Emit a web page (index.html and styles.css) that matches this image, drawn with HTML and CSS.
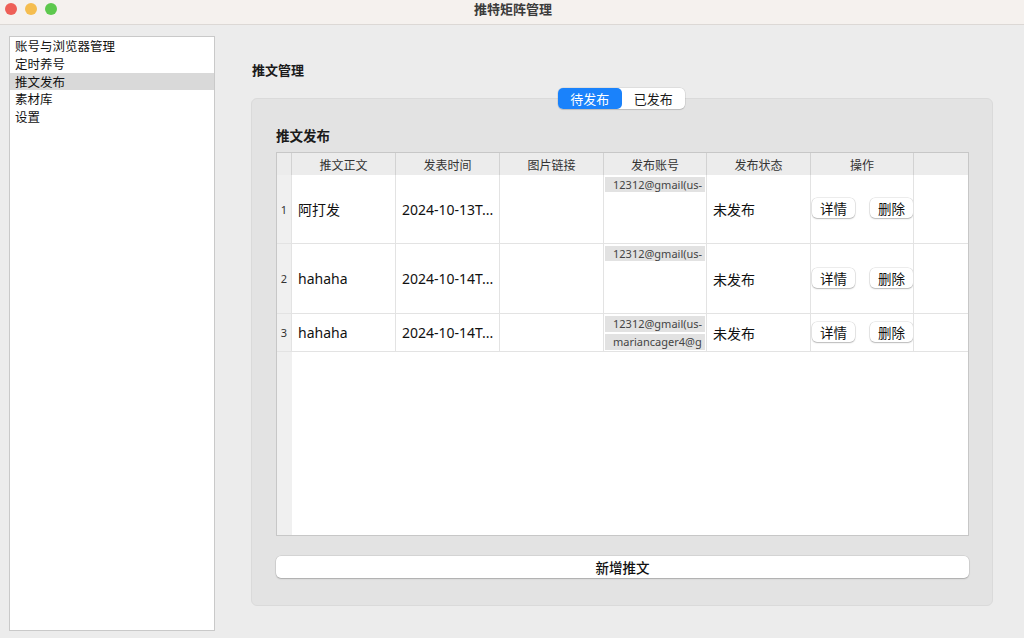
FILE: index.html
```html
<!DOCTYPE html>
<html lang="zh">
<head>
<meta charset="utf-8">
<title>推特矩阵管理</title>
<link rel="stylesheet" href="styles.css">
</head>
<body>
<div class="window">
  <header class="titlebar">
    <div class="lights">
      <span class="light red"></span>
      <span class="light yellow"></span>
      <span class="light green"></span>
    </div>
    <div class="title">推特矩阵管理</div>
  </header>
  <div class="main">
    <aside class="sidebar">
      <div class="nav-item">账号与浏览器管理</div>
      <div class="nav-item">定时养号</div>
      <div class="nav-item active">推文发布</div>
      <div class="nav-item">素材库</div>
      <div class="nav-item">设置</div>
    </aside>
    <section class="content">
      <h1 class="page-title">推文管理</h1>
      <div class="segmented">
        <span class="seg on">待发布</span>
        <span class="seg">已发布</span>
      </div>
      <div class="group">
        <div class="group-title">推文发布</div>
        <div class="table">
          <div class="row head">
            <div class="idx"></div>
            <div class="cell">推文正文</div>
            <div class="cell">发表时间</div>
            <div class="cell">图片链接</div>
            <div class="cell">发布账号</div>
            <div class="cell">发布状态</div>
            <div class="cell">操作</div>
            <div class="filler"></div>
          </div>
          <div class="row r1">
            <div class="idx">1</div>
            <div class="cell">阿打发</div>
            <div class="cell">2024-10-13T...</div>
            <div class="cell"></div>
            <div class="cell acc"><span class="chip">12312@gmail(us-</span></div>
            <div class="cell">未发布</div>
            <div class="cell ops"><button class="btn">详情</button><button class="btn">删除</button></div>
          </div>
          <div class="row r2">
            <div class="idx">2</div>
            <div class="cell">hahaha</div>
            <div class="cell">2024-10-14T...</div>
            <div class="cell"></div>
            <div class="cell acc"><span class="chip">12312@gmail(us-</span></div>
            <div class="cell">未发布</div>
            <div class="cell ops"><button class="btn">详情</button><button class="btn">删除</button></div>
          </div>
          <div class="row r3">
            <div class="idx">3</div>
            <div class="cell">hahaha</div>
            <div class="cell">2024-10-14T...</div>
            <div class="cell"></div>
            <div class="cell acc"><span class="chip">12312@gmail(us-</span><span class="chip">mariancager4@g</span></div>
            <div class="cell">未发布</div>
            <div class="cell ops"><button class="btn">详情</button><button class="btn">删除</button></div>
          </div>
          <div class="empty"><div class="idx"></div></div>
        </div>
        <button class="add-btn">新增推文</button>
      </div>
    </section>
  </div>
</div>
</body>
</html>
```

FILE: styles.css
```css
* { box-sizing: border-box; }
html, body { margin: 0; padding: 0; }
body {
  width: 1024px;
  height: 638px;
  overflow: hidden;
  background: #ececec;
  font-family: "Noto Sans", "Noto Sans CJK SC", sans-serif;
  color: #1d1d1d;
}
.window { display: flex; flex-direction: column; height: 638px; }

.titlebar {
  height: 25px;
  flex: none;
  background: #f5f1ee;
  border-bottom: 1px solid #dcd8d5;
  display: flex;
  align-items: center;
  position: relative;
}
.lights { display: flex; gap: 8px; padding-left: 5px; padding-bottom: 6px; }
.light { width: 12px; height: 12px; border-radius: 50%; display: block; }
.red { background: #ee5f57; }
.yellow { background: #f5bd4f; }
.green { background: #5dc84d; }
.title {
  position: absolute;
  left: 0; right: 0; top: 0;
  text-align: center;
  font-family: "Noto Sans CJK SC", sans-serif;
  font-size: 13px;
  font-weight: 700;
  color: #3b3b3b;
  line-height: 17px;
  padding-left: 2px;
}

.main { flex: 1; display: flex; min-height: 0; }

.sidebar {
  width: 206px;
  height: 595px;
  margin: 11px 0 0 9px;
  background: #fff;
  border: 1px solid #c9c9c9;
  padding-top: 0;
  flex: none;
}
.nav-item {
  height: 17.8px;
  line-height: 17.8px;
  padding-left: 5px;
  font-family: "Noto Sans CJK SC", sans-serif;
  font-size: 12.5px;
  color: #111;
}
.nav-item.active { background: #d9d9d9; }

.content {
  flex: 1;
  padding: 36px 31px 0 36px;
  display: flex;
  flex-direction: column;
}
.page-title {
  margin: 0 0 0 1px;
  font-family: "Noto Sans CJK SC", sans-serif;
  font-size: 13px;
  font-weight: 700;
  line-height: 18px;
  color: #1a1a1a;
  height: 17px;
}

.segmented {
  align-self: center;
  margin-top: 10px;
  display: flex;
  height: 21px;
  border-radius: 5px;
  background: #fff;
  box-shadow: 0 0 0 0.5px rgba(0,0,0,0.12), 0 1px 1px rgba(0,0,0,0.12);
  position: relative;
  z-index: 2;
  margin-left: -1px;
}
.seg {
  width: 63.5px;
  text-align: center;
  font-family: "Noto Sans CJK SC", sans-serif;
  font-size: 13px;
  line-height: 21px;
  color: #1a1a1a;
}
.seg.on {
  background: #1a82fb;
  color: #fff;
  border-radius: 5px;
}

.group {
  margin-top: -11px;
  height: 508px;
  background: #e3e3e3;
  border: 1px solid #dadada;
  border-radius: 6px;
  padding: 27px 23px 0 24px;
  display: flex;
  flex-direction: column;
}
.group-title {
  font-family: "Noto Sans CJK SC", sans-serif;
  font-size: 13.5px;
  font-weight: 700;
  line-height: 18px;
  height: 18px;
  color: #1a1a1a;
  margin-bottom: 8px;
}

.table {
  height: 384px;
  background: #fff;
  border: 1px solid #c7c7c7;
  display: flex;
  flex-direction: column;
}
.row { display: flex; flex: none; border-bottom: 1px solid #e3e3e3; }
.row.head { height: 22px; background: #ececec; border-bottom: none; }
.r1 { height: 69px; }
.r2 { height: 70px; }
.r3 { height: 38px; }
.idx {
  width: 15px;
  flex: none;
  background: #f0f0f0;
  border-right: 1px solid #e3e3e3;
  font-size: 11px;
  color: #333;
  display: flex;
  align-items: center;
  justify-content: center;
  font-family: "Noto Sans", sans-serif;
}
.head .idx { background: #ececec; border-right: 1px solid #d2d2d2; }
.cell {
  width: 104px;
  flex: none;
  border-right: 1px solid #e3e3e3;
  display: flex;
  align-items: center;
  padding-left: 6px;
  font-family: "Noto Sans", "Noto Sans CJK SC", sans-serif;
  font-size: 14px;
  font-weight: 400;
  color: #111;
  white-space: nowrap;
  overflow: hidden;
}
.head .cell {
  justify-content: center;
  padding-left: 0;
  font-family: "Noto Sans CJK SC", sans-serif;
  font-size: 12px;
  font-weight: 400;
  color: #333;
  border-right: 1px solid #d2d2d2;
}
.row .cell:nth-child(5), .row .cell:nth-child(7) { width: 103px; }
.filler { flex: 1; }

.cell.acc {
  flex-direction: column;
  align-items: stretch;
  justify-content: flex-start;
  padding: 2px 1px 0 1px;
  gap: 2px;
}
.chip {
  display: block;
  height: 15px;
  line-height: 15px;
  background: #e2e2e2;
  font-size: 11px;
  font-weight: 400;
  color: #444;
  padding-left: 8px;
  overflow: hidden;
  white-space: nowrap;
}
.r3 .chip { height: 16px; line-height: 16px; }

.cell.ops { padding-left: 1px; gap: 15px; padding-bottom: 2px; }
.btn {
  width: 43px;
  height: 20px;
  border: none;
  border-radius: 5px;
  background: #fff;
  box-shadow: 0 0 0 0.5px rgba(0,0,0,0.14), 0 1px 1.5px rgba(0,0,0,0.22);
  font-family: "Noto Sans CJK SC", sans-serif;
  font-size: 13.5px;
  color: #111;
  padding: 0;
  line-height: 20px;
}

.empty { flex: 1; display: flex; }
.empty .idx { border-right: none; }

.add-btn {
  margin-top: 20px;
  height: 22px;
  width: 100%;
  border: none;
  border-radius: 5px;
  background: #fff;
  box-shadow: 0 0 0 0.5px rgba(0,0,0,0.12), 0 1px 1.5px rgba(0,0,0,0.2);
  font-family: "Noto Sans CJK SC", sans-serif;
  font-size: 13.5px;
  font-weight: 500;
  color: #111;
  padding: 0;
}
```
